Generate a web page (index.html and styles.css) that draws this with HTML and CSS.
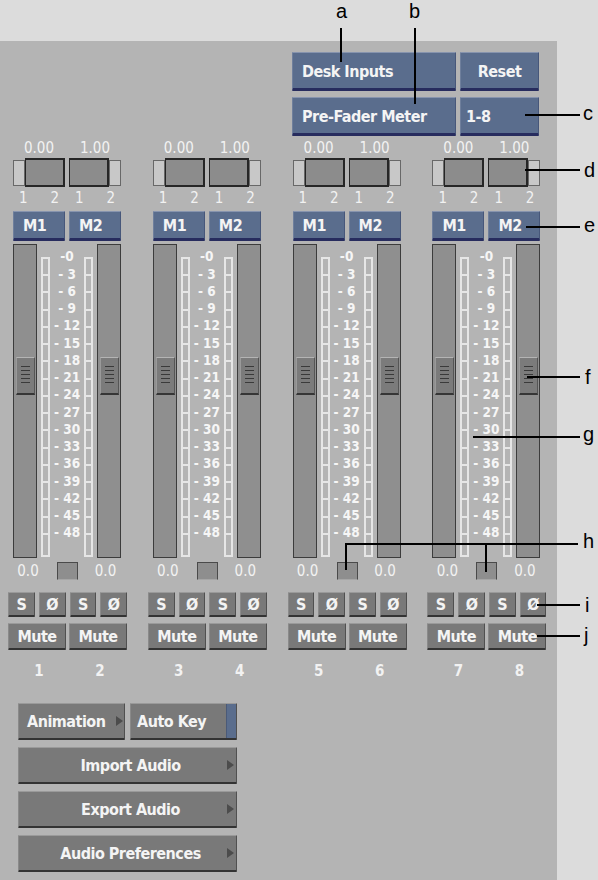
FILE: index.html
```html
<!DOCTYPE html>
<html>
<head>
<meta charset="utf-8">
<link rel="stylesheet" href="styles.css">
</head>
<body>
<div class="panel">
  <div class="top-controls">
    <div class="btn-blue tbtn">Desk Inputs</div>
    <div class="btn-blue tbtn center">Reset</div>
    <div class="btn-blue tbtn">Pre-Fader Meter</div>
    <div class="btn-blue tbtn narrow">1-8</div>
  </div>

  <div class="channels">
    <!-- strip 1 -->
    <div class="strip">
      <div class="vals"><span>0.00</span><span>1.00</span></div>
      <div class="pans">
        <div class="pan"><div class="pan-knob"></div><div class="pan-box"></div></div>
        <div class="pan"><div class="pan-box"></div><div class="pan-knob"></div></div>
      </div>
      <div class="chans"><div class="chan"><span>1</span><span>2</span></div><div class="chan"><span>1</span><span>2</span></div></div>
      <div class="mbtns"><div class="btn-blue mbtn">M1</div><div class="btn-blue mbtn">M2</div></div>
      <div class="faders">
        <div class="fader"><div class="fknob"><i></i><i></i><i></i><i></i><i></i></div></div>
        <div class="meter"></div>
        <div class="scale"><span>-0</span><span>- 3</span><span>- 6</span><span>- 9</span><span>- 12</span><span>- 15</span><span>- 18</span><span>- 21</span><span>- 24</span><span>- 27</span><span>- 30</span><span>- 33</span><span>- 36</span><span>- 39</span><span>- 42</span><span>- 45</span><span>- 48</span></div>
        <div class="meter"></div>
        <div class="fader"><div class="fknob"><i></i><i></i><i></i><i></i><i></i></div></div>
      </div>
      <div class="readout"><span class="rv">0.0</span><div class="mini"></div><span class="rv">0.0</span></div>
      <div class="sbtns"><div class="btn-gray">S</div><div class="btn-gray">Ø</div><div class="btn-gray">S</div><div class="btn-gray">Ø</div></div>
      <div class="mutes"><div class="btn-gray">Mute</div><div class="btn-gray">Mute</div></div>
      <div class="nums"><span>1</span><span>2</span></div>
    </div>
    <!-- strip 2 -->
    <div class="strip">
      <div class="vals"><span>0.00</span><span>1.00</span></div>
      <div class="pans">
        <div class="pan"><div class="pan-knob"></div><div class="pan-box"></div></div>
        <div class="pan"><div class="pan-box"></div><div class="pan-knob"></div></div>
      </div>
      <div class="chans"><div class="chan"><span>1</span><span>2</span></div><div class="chan"><span>1</span><span>2</span></div></div>
      <div class="mbtns"><div class="btn-blue mbtn">M1</div><div class="btn-blue mbtn">M2</div></div>
      <div class="faders">
        <div class="fader"><div class="fknob"><i></i><i></i><i></i><i></i><i></i></div></div>
        <div class="meter"></div>
        <div class="scale"><span>-0</span><span>- 3</span><span>- 6</span><span>- 9</span><span>- 12</span><span>- 15</span><span>- 18</span><span>- 21</span><span>- 24</span><span>- 27</span><span>- 30</span><span>- 33</span><span>- 36</span><span>- 39</span><span>- 42</span><span>- 45</span><span>- 48</span></div>
        <div class="meter"></div>
        <div class="fader"><div class="fknob"><i></i><i></i><i></i><i></i><i></i></div></div>
      </div>
      <div class="readout"><span class="rv">0.0</span><div class="mini"></div><span class="rv">0.0</span></div>
      <div class="sbtns"><div class="btn-gray">S</div><div class="btn-gray">Ø</div><div class="btn-gray">S</div><div class="btn-gray">Ø</div></div>
      <div class="mutes"><div class="btn-gray">Mute</div><div class="btn-gray">Mute</div></div>
      <div class="nums"><span>3</span><span>4</span></div>
    </div>
    <!-- strip 3 -->
    <div class="strip">
      <div class="vals"><span>0.00</span><span>1.00</span></div>
      <div class="pans">
        <div class="pan"><div class="pan-knob"></div><div class="pan-box"></div></div>
        <div class="pan"><div class="pan-box"></div><div class="pan-knob"></div></div>
      </div>
      <div class="chans"><div class="chan"><span>1</span><span>2</span></div><div class="chan"><span>1</span><span>2</span></div></div>
      <div class="mbtns"><div class="btn-blue mbtn">M1</div><div class="btn-blue mbtn">M2</div></div>
      <div class="faders">
        <div class="fader"><div class="fknob"><i></i><i></i><i></i><i></i><i></i></div></div>
        <div class="meter"></div>
        <div class="scale"><span>-0</span><span>- 3</span><span>- 6</span><span>- 9</span><span>- 12</span><span>- 15</span><span>- 18</span><span>- 21</span><span>- 24</span><span>- 27</span><span>- 30</span><span>- 33</span><span>- 36</span><span>- 39</span><span>- 42</span><span>- 45</span><span>- 48</span></div>
        <div class="meter"></div>
        <div class="fader"><div class="fknob"><i></i><i></i><i></i><i></i><i></i></div></div>
      </div>
      <div class="readout"><span class="rv">0.0</span><div class="mini"></div><span class="rv">0.0</span></div>
      <div class="sbtns"><div class="btn-gray">S</div><div class="btn-gray">Ø</div><div class="btn-gray">S</div><div class="btn-gray">Ø</div></div>
      <div class="mutes"><div class="btn-gray">Mute</div><div class="btn-gray">Mute</div></div>
      <div class="nums"><span>5</span><span>6</span></div>
    </div>
    <!-- strip 4 -->
    <div class="strip">
      <div class="vals"><span>0.00</span><span>1.00</span></div>
      <div class="pans">
        <div class="pan"><div class="pan-knob"></div><div class="pan-box"></div></div>
        <div class="pan"><div class="pan-box"></div><div class="pan-knob"></div></div>
      </div>
      <div class="chans"><div class="chan"><span>1</span><span>2</span></div><div class="chan"><span>1</span><span>2</span></div></div>
      <div class="mbtns"><div class="btn-blue mbtn">M1</div><div class="btn-blue mbtn">M2</div></div>
      <div class="faders">
        <div class="fader"><div class="fknob"><i></i><i></i><i></i><i></i><i></i></div></div>
        <div class="meter"></div>
        <div class="scale"><span>-0</span><span>- 3</span><span>- 6</span><span>- 9</span><span>- 12</span><span>- 15</span><span>- 18</span><span>- 21</span><span>- 24</span><span>- 27</span><span>- 30</span><span>- 33</span><span>- 36</span><span>- 39</span><span>- 42</span><span>- 45</span><span>- 48</span></div>
        <div class="meter"></div>
        <div class="fader"><div class="fknob"><i></i><i></i><i></i><i></i><i></i></div></div>
      </div>
      <div class="readout"><span class="rv">0.0</span><div class="mini"></div><span class="rv">0.0</span></div>
      <div class="sbtns"><div class="btn-gray">S</div><div class="btn-gray">Ø</div><div class="btn-gray">S</div><div class="btn-gray">Ø</div></div>
      <div class="mutes"><div class="btn-gray">Mute</div><div class="btn-gray">Mute</div></div>
      <div class="nums"><span>7</span><span>8</span></div>
    </div>
  </div>

  <div class="actions">
    <div class="act-row">
      <div class="btn-gray act act-left">Animation<span class="arrow arrow-inline"></span></div>
      <div class="btn-gray act act-left autokey">Auto Key<span class="blue-strip"></span></div>
    </div>
    <div class="btn-gray act act-wide">Import Audio<span class="arrow arrow-edge"></span></div>
    <div class="btn-gray act act-wide">Export Audio<span class="arrow arrow-edge"></span></div>
    <div class="btn-gray act act-wide">Audio Preferences<span class="arrow arrow-edge"></span></div>
  </div>
</div>

<!-- callouts -->
<span class="callout lbl-a">a</span>
<span class="callout lbl-b">b</span>
<span class="callout lbl-c">c</span>
<span class="callout lbl-d">d</span>
<span class="callout lbl-e">e</span>
<span class="callout lbl-f">f</span>
<span class="callout lbl-g">g</span>
<span class="callout lbl-h">h</span>
<span class="callout lbl-i">i</span>
<span class="callout lbl-j">j</span>
<div class="lead v line-a"></div>
<div class="lead v line-b"></div>
<div class="lead h line-c"></div>
<div class="lead h line-d"></div>
<div class="lead h line-e"></div>
<div class="lead h line-f"></div>
<div class="lead h line-g"></div>
<div class="lead h line-h"></div>
<div class="lead v line-h1"></div>
<div class="lead v line-h2"></div>
<div class="lead h line-i"></div>
<div class="lead h line-j"></div>
</body>
</html>
```

FILE: styles.css
```css
* { box-sizing: border-box; }
html, body { margin: 0; padding: 0; }
body {
  width: 598px;
  height: 880px;
  background: #dcdcdc;
  position: relative;
  overflow: hidden;
  font-family: "DejaVu Sans Condensed", "DejaVu Sans", sans-serif;
  font-stretch: condensed;
  color: #f2f2f2;
}
.panel {
  margin-top: 41px;
  width: 557px;
  height: 839px;
  background: #b4b4b4;
  padding-top: 11px;
}

/* buttons */
.btn-blue {
  background: #5a6d8d;
  border-top: 1px solid #8794ae;
  border-left: 1px solid #6f7f9c;
  border-right: 1px solid #47577a;
  border-bottom: 3px solid #272c5e;
  border-radius: 1px;
  color: #f4f4f4;
  font-weight: bold;
  font-size: 16px;
  letter-spacing: -0.5px;
  display: flex;
  align-items: center;
}
.btn-gray {
  background: #797979;
  border-top: 1px solid #9a9a9a;
  border-left: 1px solid #8a8a8a;
  border-right: 1px solid #505050;
  border-bottom: 2px solid #333333;
  border-radius: 1px;
  color: #f4f4f4;
  font-weight: bold;
  font-size: 16px;
  letter-spacing: -0.5px;
  display: flex;
  align-items: center;
  justify-content: center;
}

.top-controls {
  margin-left: 292px;
  display: grid;
  grid-template-columns: 164px 79px;
  grid-auto-rows: 39px;
  gap: 6px 4px;
}
.tbtn { padding-left: 9px; padding-top: 2px; }
.tbtn.center { justify-content: center; padding-left: 0; }
.tbtn.narrow { padding-left: 5px; }

/* channel strips */
.channels {
  display: flex;
  margin-top: 4px;
  padding-left: 8px;
}
.strip {
  width: 139.8px;
  flex: none;
}
.vals, .pans, .chans, .mbtns, .faders, .readout {
  margin-left: 5px;
  width: 108px;
}
.vals {
  height: 16px;
  display: grid;
  grid-template-columns: 52px 52px;
  gap: 4px;
  font-size: 15px;
  line-height: 16px;
  text-align: center;
}
.pans {
  margin-top: 2px;
  height: 29px;
  display: grid;
  grid-template-columns: 52px 52px;
  gap: 4px;
}
.pan { display: flex; align-items: center; height: 29px; }
.pan-knob {
  width: 12px;
  height: 26px;
  background: #c8c8c8;
  border: 1px solid #686868;
}
.pan-box {
  flex: 1;
  height: 29px;
  background: #8c8c8c;
  border: 2px solid #262626;
  border-left-width: 1px;
}
.chans {
  margin-top: 3px;
  height: 16px;
  display: grid;
  grid-template-columns: 52px 52px;
  gap: 4px;
  font-size: 15px;
  line-height: 16px;
}
.chan {
  display: flex;
  justify-content: space-between;
  padding: 0 6px 0 6px;
}
.mbtns {
  margin-top: 5px;
  height: 30px;
  display: grid;
  grid-template-columns: 52px 52px;
  gap: 4px;
}
.mbtn { padding-left: 9px; padding-top: 1px; font-size: 16px; }

.faders {
  margin-top: 3px;
  height: 314px;
  display: flex;
  align-items: flex-start;
}
.fader {
  width: 24px;
  height: 314px;
  background: #8f8f8f;
  border: 1px solid #3c3c3c;
  padding-top: 112px;
  padding-left: 2px;
}
.fader + .meter { margin-left: 4px; }
.meter + .fader { margin-left: 4px; }
.fknob {
  width: 19px;
  height: 38px;
  background: #7b7b7b;
  border-top: 1px solid #b4b4b4;
  border-left: 1px solid #9a9a9a;
  border-right: 1px solid #555555;
  border-bottom: 2px solid #363636;
  display: flex;
  flex-direction: column;
  align-items: center;
  padding-top: 8px;
  gap: 3px;
}
.fknob i {
  display: block;
  width: 9px;
  height: 1px;
  background: #3a3a3a;
}
.meter {
  width: 9px;
  height: 300px;
  margin-top: 13px;
  border: 2px solid #e6e6e6;
  background: repeating-linear-gradient(to bottom, transparent 0, transparent 15.25px, #e6e6e6 15.25px, #e6e6e6 17.25px) top left / 100% 276px no-repeat;
}
.scale {
  width: 34px;
  margin-top: 4.4px;
  display: flex;
  flex-direction: column;
  font-size: 13.5px;
  font-weight: bold;
  color: #f6f6f6;
  text-align: center;
}
.scale span {
  display: block;
  height: 17.25px;
  line-height: 17.25px;
  white-space: pre;
}

.readout {
  margin-top: 4px;
  height: 18px;
  display: flex;
  align-items: center;
  font-size: 15px;
}
.rv { width: 30px; text-align: center; line-height: 18px; }
.rv:last-child { width: 31px; }
.mini {
  width: 21px;
  height: 18px;
  margin: 0 12px 0 14px;
  background: #8e8e8e;
  border: 1px solid #4a4a4a;
  border-bottom-color: #a6a6a6;
}

.sbtns {
  margin-top: 12px;
  width: 119px;
  height: 25px;
  display: grid;
  grid-template-columns: repeat(4, 1fr);
  gap: 4px;
}
.mutes {
  margin-top: 6px;
  width: 119px;
  height: 27px;
  display: grid;
  grid-template-columns: 58px 58px;
  gap: 3px;
}
.nums {
  margin-top: 13px;
  width: 119px;
  height: 16px;
  display: grid;
  grid-template-columns: 58px 58px;
  gap: 3px;
  font-size: 15px;
  font-weight: bold;
  line-height: 16px;
  text-align: center;
  padding-left: 2px;
}

/* bottom actions */
.actions {
  margin-top: 24px;
  margin-left: 18px;
  width: 219px;
  display: flex;
  flex-direction: column;
  gap: 7px;
}
.act-row {
  display: grid;
  grid-template-columns: 107px 107px;
  gap: 5px;
}
.act {
  height: 37px;
  position: relative;
}
.act-left { justify-content: flex-start; padding-left: 8px; }
.autokey { padding-left: 6px; padding-right: 0; }
.act-wide { padding-left: 6px; }
.arrow {
  width: 0;
  height: 0;
  border-top: 5.5px solid transparent;
  border-bottom: 5.5px solid transparent;
  border-left: 7px solid #4c4c4c;
}
.arrow-inline { margin-left: auto; margin-right: 1px; }
.arrow-edge { position: absolute; right: 2px; top: 12px; }
.blue-strip {
  margin-left: auto;
  width: 10px;
  align-self: stretch;
  background: #5a6d8d;
  border-left: 1px solid #4a5a78;
}

/* callouts */
.callout {
  position: absolute;
  font-family: "Liberation Sans", Arial, sans-serif;
  font-stretch: normal;
  font-size: 20px;
  line-height: 22px;
  color: #000;
  letter-spacing: 0;
}
.lbl-a { left: 336px; top: 0; }
.lbl-b { left: 409px; top: 0; }
.lbl-c { left: 583px; top: 102px; }
.lbl-d { left: 584px; top: 159px; }
.lbl-e { left: 584px; top: 214px; }
.lbl-f { left: 585px; top: 366px; }
.lbl-g { left: 583px; top: 423px; }
.lbl-h { left: 583px; top: 530px; }
.lbl-i { left: 585px; top: 594px; }
.lbl-j { left: 584px; top: 624px; }
.lead { position: absolute; background: #000; }
.lead.v { width: 2px; }
.lead.h { height: 2px; }
.line-a { left: 340px; top: 28px; height: 34px; }
.line-b { left: 414px; top: 28px; height: 76px; }
.line-c { left: 525px; top: 114px; width: 55px; }
.line-d { left: 525px; top: 169px; width: 55px; }
.line-e { left: 526px; top: 226px; width: 54px; }
.line-f { left: 527px; top: 376px; width: 53px; }
.line-g { left: 473px; top: 436px; width: 107px; }
.line-h { left: 345px; top: 543px; width: 233px; }
.line-h1 { left: 345px; top: 543px; height: 27px; }
.line-h2 { left: 485px; top: 543px; height: 29px; }
.line-i { left: 537px; top: 604px; width: 43px; }
.line-j { left: 537px; top: 635px; width: 43px; }
```
